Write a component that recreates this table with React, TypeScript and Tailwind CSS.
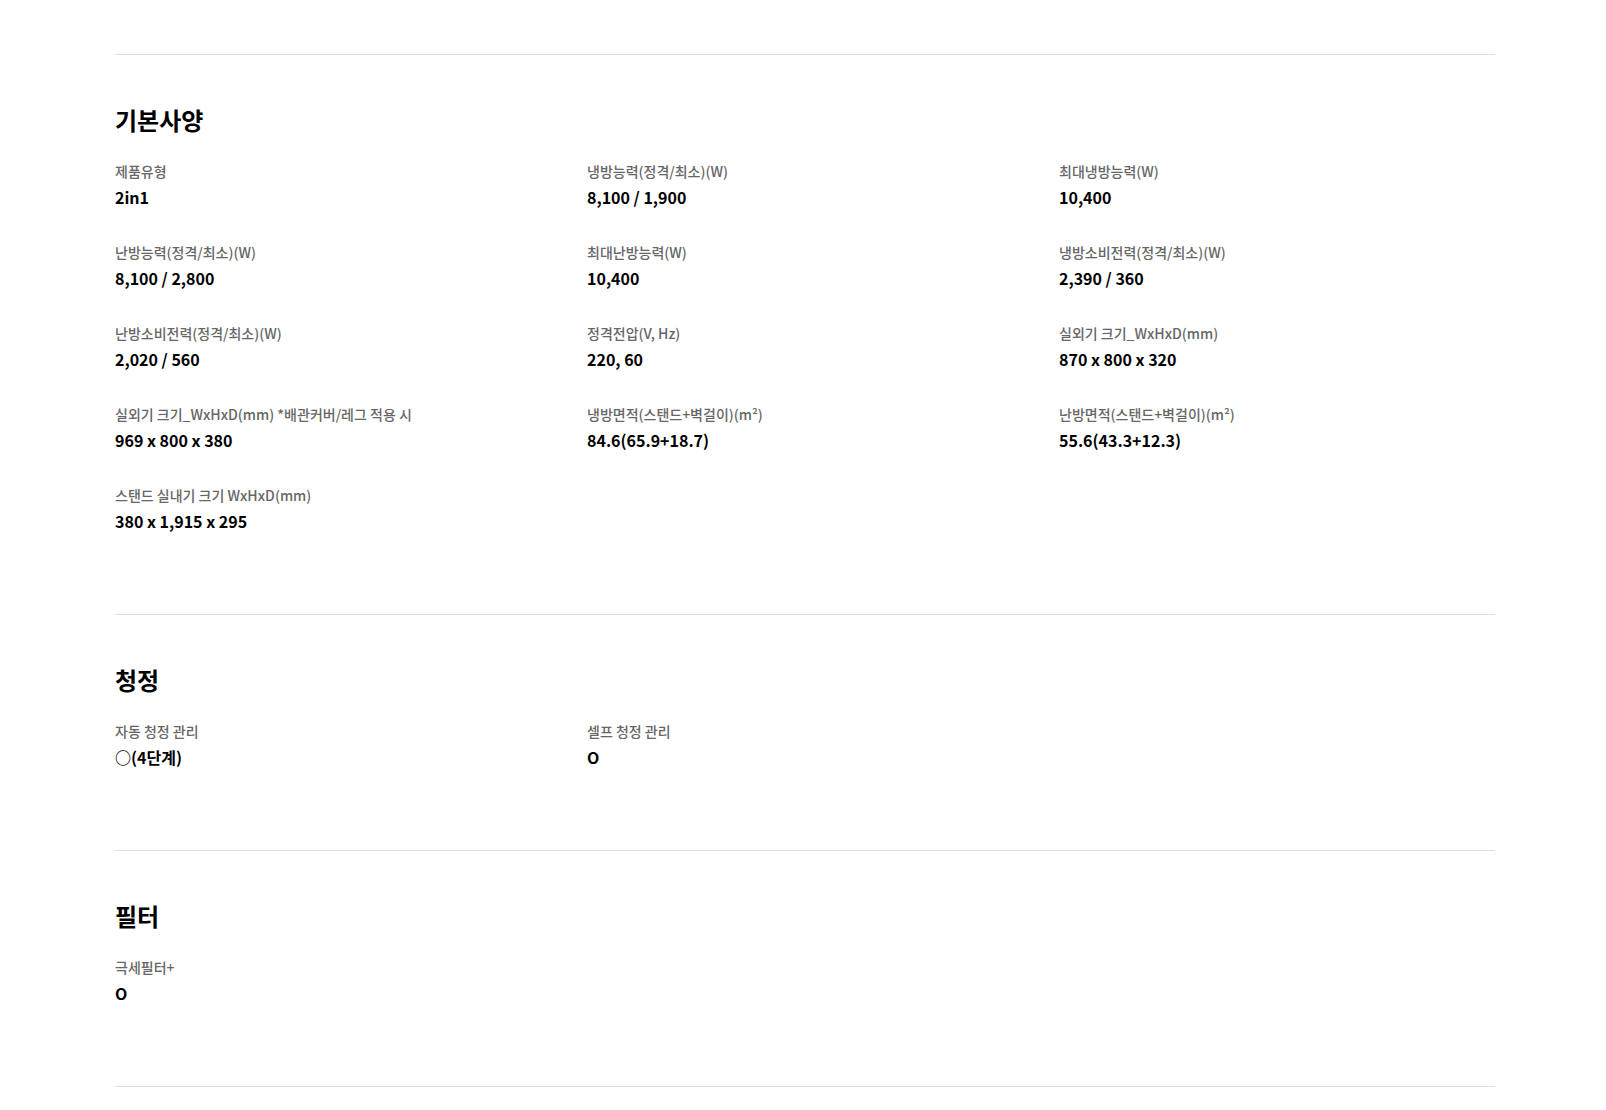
import React from "react";

type Spec = { label: string; value: string };
type Section = { title: string; items: Spec[] };

const sections: Section[] = [
  {
    title: "기본사양",
    items: [
      { label: "제품유형", value: "2in1" },
      { label: "냉방능력(정격/최소)(W)", value: "8,100 / 1,900" },
      { label: "최대냉방능력(W)", value: "10,400" },
      { label: "난방능력(정격/최소)(W)", value: "8,100 / 2,800" },
      { label: "최대난방능력(W)", value: "10,400" },
      { label: "냉방소비전력(정격/최소)(W)", value: "2,390 / 360" },
      { label: "난방소비전력(정격/최소)(W)", value: "2,020 / 560" },
      { label: "정격전압(V, Hz)", value: "220, 60" },
      { label: "실외기 크기_WxHxD(mm)", value: "870 x 800 x 320" },
      { label: "실외기 크기_WxHxD(mm) *배관커버/레그 적용 시", value: "969 x 800 x 380" },
      { label: "냉방면적(스탠드+벽걸이)(m²)", value: "84.6(65.9+18.7)" },
      { label: "난방면적(스탠드+벽걸이)(m²)", value: "55.6(43.3+12.3)" },
      { label: "스탠드 실내기 크기 WxHxD(mm)", value: "380 x 1,915 x 295" },
    ],
  },
  {
    title: "청정",
    items: [
      { label: "자동 청정 관리", value: "○(4단계)" },
      { label: "셀프 청정 관리", value: "O" },
    ],
  },
  {
    title: "필터",
    items: [{ label: "극세필터+", value: "O" }],
  },
];

export default function App() {
  return (
    <div
      className="min-h-[1110px] bg-white pt-[54px] pl-[115px]"
      style={{ fontFamily: '"Noto Sans CJK KR", "Noto Sans", sans-serif' }}
    >
      <div className="w-[1380px] border-b border-[#e0e0e0]">
        {sections.map((s) => (
          <section key={s.title} className="border-t border-[#e0e0e0] pt-[49px] pb-[81px]">
            <h2 className="text-[24px] leading-[32px] font-bold text-black">{s.title}</h2>
            <div className="mt-[25px] grid grid-cols-3 gap-x-[36px] gap-y-[33px]">
              {s.items.map((it, i) => (
                <div key={i}>
                  <div className="text-[14px] leading-[20px] font-medium text-[#666]">{it.label}</div>
                  <div className="mt-[4px] text-[16px] leading-[24px] font-bold text-black">{it.value}</div>
                </div>
              ))}
            </div>
          </section>
        ))}
      </div>
    </div>
  );
}
